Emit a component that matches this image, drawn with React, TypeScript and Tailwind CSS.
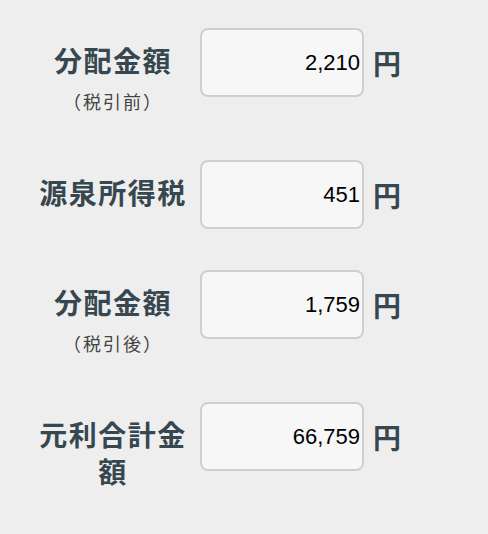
const rows = [
  { label: '分配金額', sub: '（税引前）', value: '2,210' },
  { label: '源泉所得税', value: '451' },
  { label: '分配金額', sub: '（税引後）', value: '1,759' },
  { label: '元利合計金額', value: '66,759' },
]

function Row({ label, sub, value }: { label: string; sub?: string; value: string }) {
  return (
    <div className="flex items-start">
      <div className="w-[150px] pt-[14px] text-center">
        <div className="text-[28px] font-bold leading-[37px] tracking-[1.5px] text-[#37474f]">
          {label}
        </div>
        {sub && (
          <div className="mt-[10px] pb-[6px] text-[18px] leading-[24px] tracking-[2px] text-[#444]">
            {sub}
          </div>
        )}
      </div>
      <div className="ml-[12px] flex h-[69px] w-[164px] items-center justify-end rounded-lg border-2 border-[#cfcfcf] bg-[#f7f7f7] pr-[2px]">
        <span className="text-[22px] text-black [font-family:'Liberation_Sans',Arial,sans-serif]">
          {value}
        </span>
      </div>
      <div className="ml-[9px] flex h-[69px] items-center text-[28px] font-bold text-[#37474f]">
        円
      </div>
    </div>
  )
}

export default function App() {
  return (
    <div
      className="min-h-screen w-full bg-[#eeeeee] pl-[38px] pt-[28px]"
      style={{ fontFamily: '"Noto Sans CJK JP", "Noto Sans", sans-serif' }}
    >
      <div className="flex flex-col gap-[41px]">
        {rows.map((r, i) => (
          <Row key={i} {...r} />
        ))}
      </div>
    </div>
  )
}
